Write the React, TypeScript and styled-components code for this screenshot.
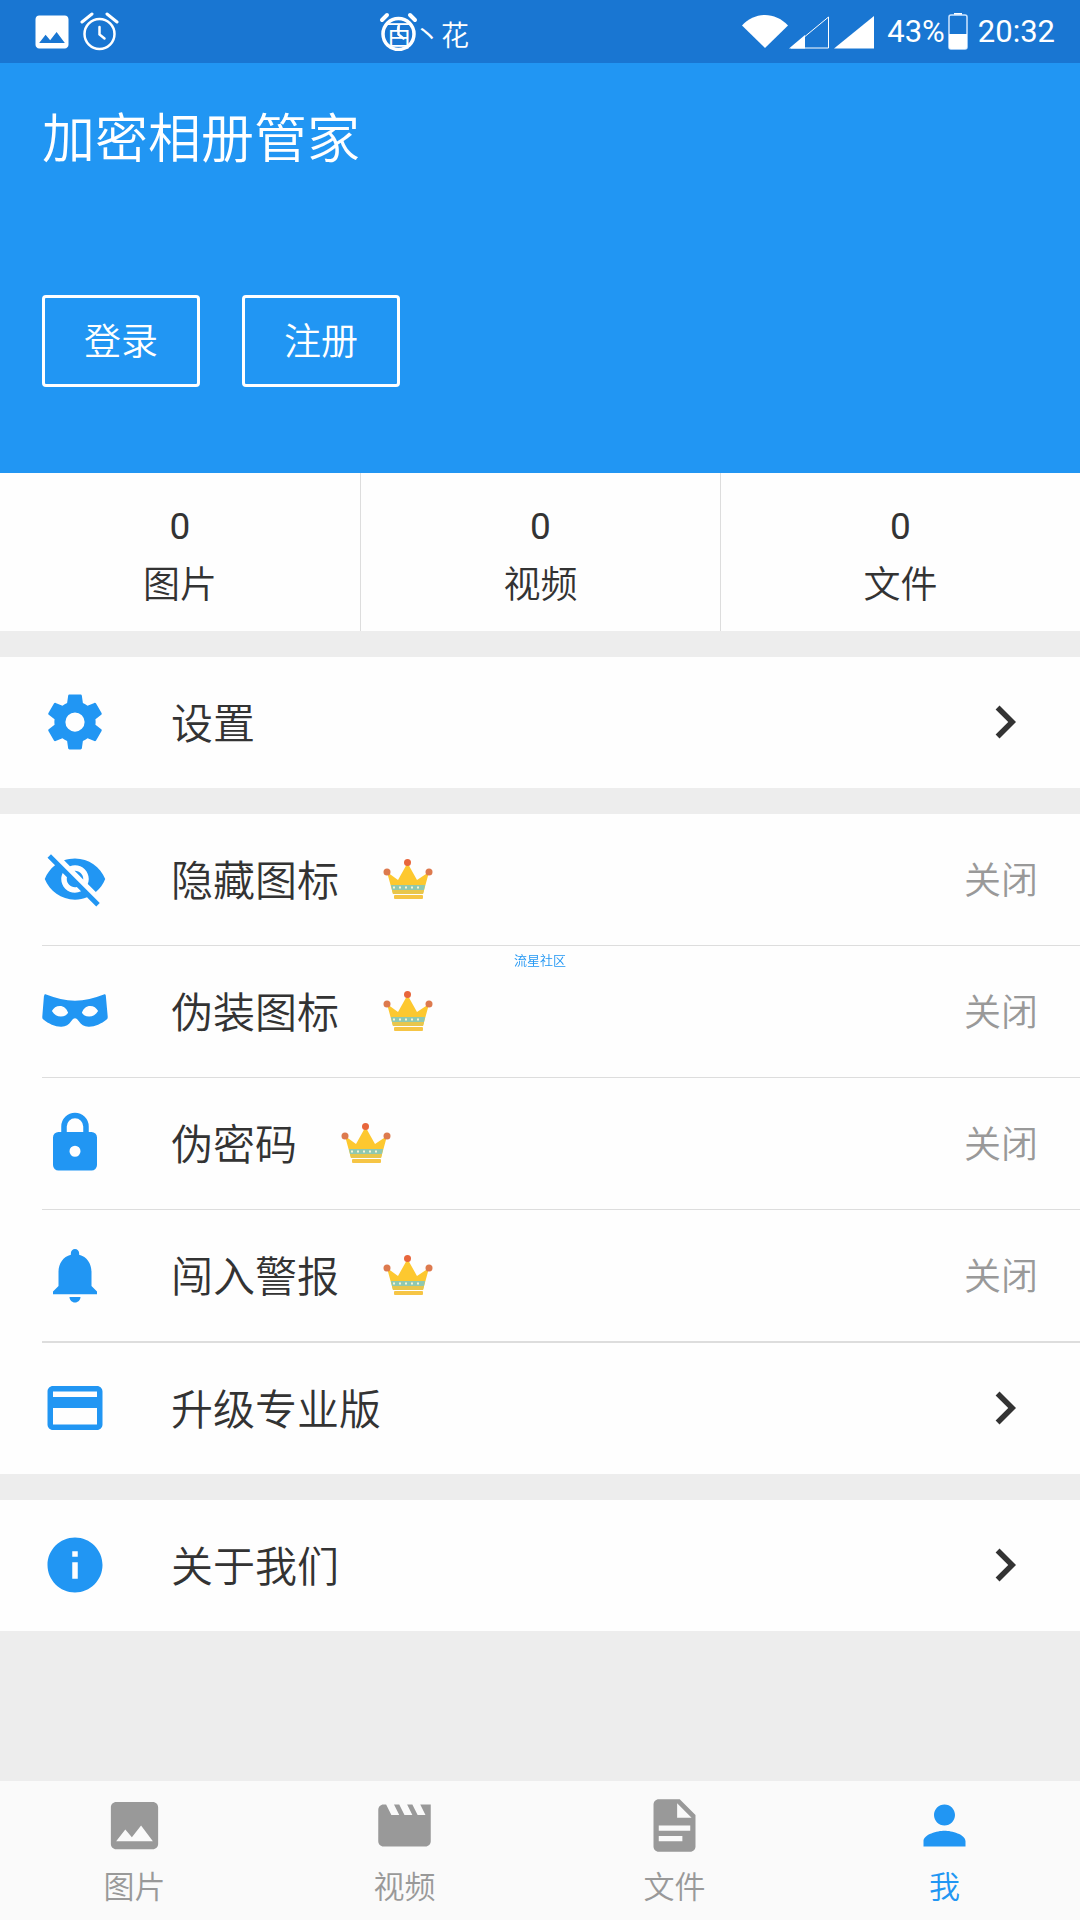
import React from "react";
import styled, { createGlobalStyle } from "styled-components";

const color = {
  primary: "#2196f3",
  primaryDark: "#1976d2",
  page: "#ededed",
  surface: "#fefefe",
  nav: "#fafafa",
  text: "#333333",
  muted: "#999999",
  line: "#dddddd",
};

const GlobalStyle = createGlobalStyle`
  * { box-sizing: border-box; }
  body {
    margin: 0;
    background: ${color.page};
    color: ${color.text};
    font-family: Roboto, "Noto Sans CJK SC", sans-serif;
    font-weight: 350;
  }
  button { font: inherit; color: inherit; background: none; border: 0; padding: 0; cursor: pointer; }
  a { color: inherit; text-decoration: none; }
  svg { display: block; flex: none; }
`;

const Page = styled.div`
  min-height: 100vh;
  display: flex;
  flex-direction: column;
`;

const StatusBar = styled.div`
  position: relative;
  display: flex;
  align-items: center;
  justify-content: space-between;
  height: 63px;
  padding: 0 25px 0 30px;
  background: ${color.primaryDark};
  color: #fff;
  font-size: 31px;
  font-weight: 400;
`;

const StatusGroup = styled.div<{ $gap: number }>`
  display: flex;
  align-items: center;
  gap: ${(p) => p.$gap}px;
`;

const Ticker = styled.div`
  position: absolute;
  left: 379px;
  top: 12px;
  display: grid;
  align-items: start;
  font-size: 28px;
  font-weight: 350;
  line-height: 50px;

  & > * { grid-area: 1 / 1; }
  & > span { padding-left: 6px; }
`;

const Level = styled.span`
  padding-left: 10px;
`;

const Clock = styled.time`
  padding-left: 7px;
`;

const Header = styled.header`
  display: flex;
  flex-direction: column;
  gap: 115px;
  padding: 37px 42px 86px;
  background: ${color.primary};
  color: #fff;
`;

const Title = styled.h1`
  margin: 0;
  font-size: 53px;
  font-weight: inherit;
  line-height: 80px;
`;

const Actions = styled.div`
  display: flex;
  gap: 42px;
`;

const OutlineButton = styled.button`
  && {
    padding: 18px 39px 14px;
    border: 3px solid #fff;
    border-radius: 4px;
    font-size: 37px;
    line-height: 54px;
  }
`;

const Stats = styled.section`
  display: grid;
  grid-template-columns: repeat(3, 1fr);
  background: ${color.surface};
`;

const Stat = styled.div`
  display: flex;
  flex-direction: column;
  align-items: center;
  gap: 1px;
  padding: 25px 0 16px;
  font-size: 37px;
  line-height: 58px;

  & + & { border-left: 1px solid ${color.line}; }
`;

const StatCount = styled.span`
  font-weight: 400;
`;

const Groups = styled.main`
  flex: 1;
  display: flex;
  flex-direction: column;
  gap: 26px;
  padding: 26px 0;
`;

const Group = styled.section`
  background: ${color.surface};
`;

const Divider = styled.hr<{ $thick?: boolean }>`
  height: ${(p) => (p.$thick ? 2 : 1)}px;
  margin: 0 0 0 42px;
  border: 0;
  background: ${color.line};
`;

const Row = styled.button`
  && {
    display: flex;
    align-items: center;
    width: 100%;
    height: 131px;
    padding: 0 42px 2px;
    color: ${color.text};
    text-align: left;
  }
`;

const RowIcon = styled.span`
  margin-right: 63px;
  color: ${color.primary};
`;

const RowLabel = styled.span`
  margin-right: 44px;
  padding-top: 7px;
  font-size: 42px;
  line-height: 62px;
`;

const RowEnd = styled.span`
  margin-left: auto;
`;

const RowState = styled(RowEnd)`
  padding-top: 7px;
  color: ${color.muted};
  font-size: 37px;
  line-height: 54px;
`;

const NavBar = styled.nav`
  display: grid;
  grid-template-columns: repeat(4, 1fr);
  background: ${color.nav};
`;

const NavItem = styled.a<{ $active?: boolean }>`
  display: flex;
  flex-direction: column;
  align-items: center;
  gap: 8px;
  padding: 13px 1px 9px 0;
  color: ${(p) => (p.$active ? color.primary : color.muted)};
  font-size: 31px;
  line-height: 46px;
`;

const Watermark = styled.div`
  position: fixed;
  inset: 0;
  display: grid;
  place-items: center;
  padding-bottom: 2px;
  color: ${color.primary};
  font-size: 13px;
  pointer-events: none;
`;

const paths = {
  settings:
    "M19.43 12.98c.04-.32.07-.64.07-.98s-.03-.66-.07-.98l2.11-1.65c.19-.15.24-.42.12-.64l-2-3.46c-.12-.22-.39-.3-.61-.22l-2.49 1c-.52-.4-1.08-.73-1.69-.98l-.38-2.65C14.46 2.18 14.25 2 14 2h-4c-.25 0-.46.18-.49.42l-.38 2.65c-.61.25-1.17.59-1.69.98l-2.49-1c-.23-.09-.49 0-.61.22l-2 3.46c-.13.22-.07.49.12.64l2.11 1.65c-.04.32-.07.65-.07.98s.03.66.07.98l-2.11 1.65c-.19.15-.24.42-.12.64l2 3.46c.12.22.39.3.61.22l2.49-1c.52.4 1.08.73 1.69.98l.38 2.65c.03.24.24.42.49.42h4c.25 0 .46-.18.49-.42l.38-2.65c.61-.25 1.17-.59 1.69-.98l2.49 1c.23.09.49 0 .61-.22l2-3.46c.12-.22.07-.49-.12-.64l-2.11-1.65zM12 15.5a3.5 3.5 0 1 1 0-7 3.5 3.5 0 0 1 0 7z",
  hidden:
    "M12 7c2.76 0 5 2.24 5 5 0 .65-.13 1.26-.36 1.83l2.92 2.92c1.51-1.26 2.7-2.89 3.43-4.75-1.73-4.39-6-7.5-11-7.5-1.4 0-2.74.25-3.98.7l2.16 2.16C10.74 7.13 11.35 7 12 7zM2 4.27l2.28 2.28.46.46C3.08 8.3 1.78 10.02 1 12c1.73 4.39 6 7.5 11 7.5 1.55 0 3.03-.3 4.38-.84l.42.42L19.73 22 21 20.73 3.27 3 2 4.27zM7.53 9.8l1.55 1.55c-.05.21-.08.43-.08.65 0 1.66 1.34 3 3 3 .22 0 .44-.03.65-.08l1.55 1.55c-.67.33-1.41.53-2.2.53-2.76 0-5-2.24-5-5 0-.79.2-1.53.53-2.2zm4.31-.78l3.15 3.15.02-.16c0-1.66-1.34-3-3-3l-.17.01z",
  mask:
    "M.9 6.1C1 5.9 1.2 5.9 1.5 6C5 7.2 8.500 8.300 12 8.300S19 7.200 22.500 6C22.800 5.900 23.100 5.900 23.200 6.400L23.900 14.100C23.900 14.600 23.800 14.900 23.500 15.100C21.600 16.700 19 17.800 16.900 17.700C15.300 17.600 14.200 16.900 13.400 15.700C12.900 15 12.500 14.600 12 14.600S11.100 15 10.600 15.700C9.800 16.900 8.700 17.600 7.100 17.700C5 17.800 2.400 16.700.5 15.100C.200 14.900.100 14.600.100 14.100L.700 6.600ZM3.600 12C4.500 13.400 5.500 14 6.900 14C8.200 14 9 13.300 9.500 12.600C8.900 11.100 7.900 10.200 6.500 10.200C5.200 10.200 4.200 10.900 3.600 12ZM20.400 12C19.800 10.900 18.800 10.200 17.500 10.200C16.100 10.200 15.100 11.100 14.500 12.600C15 13.300 15.800 14 17.100 14C18.500 14 19.500 13.400 20.400 12Z",
  lock:
    "M18 8h-1V6A5 5 0 0 0 7 6v2H6a2 2 0 0 0-2 2v10a2 2 0 0 0 2 2h12a2 2 0 0 0 2-2V10a2 2 0 0 0-2-2zm-6 9a2 2 0 1 1 0-4 2 2 0 0 1 0 4zM15 8H9V6a3 3 0 0 1 6 0v2z",
  bell:
    "M12 22c1.100 0 2-.9 2-2h-4c0 1.100.9 2 2 2zm6-6v-5c0-3.070-1.640-5.640-4.500-6.320V4c0-.83-.67-1.500-1.500-1.500s-1.500.67-1.500 1.500v.68C7.630 5.360 6 7.920 6 11v5l-2 2v1h16v-1l-2-2z",
  card:
    "M20 4H4c-1.110 0-1.990.89-1.990 2L2 18c0 1.110.89 2 2 2h16c1.110 0 2-.89 2-2V6c0-1.110-.89-2-2-2zm0 14H4v-6h16v6zm0-10H4V6h16v2z",
  info:
    "M12 2C6.480 2 2 6.480 2 12s4.480 10 10 10 10-4.480 10-10S17.520 2 12 2zm1 15h-2v-6h2v6zm0-8h-2V7h2v2z",
  chevron: "M10 6 8.590 7.410 13.170 12l-4.580 4.590L10 18l6-6z",
  image:
    "M21 19V5c0-1.100-.9-2-2-2H5c-1.100 0-2 .9-2 2v14c0 1.100.9 2 2 2h14c1.100 0 2-.9 2-2zM8.500 13.500l2.500 3.010L14.500 12l4.500 6H5l3.500-4.500z",
  movie:
    "M18 4l2 4h-3l-2-4h-2l2 4h-3l-2-4H8l2 4H7L5 4H4c-1.100 0-1.990.9-1.990 2L2 18c0 1.100.9 2 2 2h16c1.100 0 2-.9 2-2V4h-4z",
  file:
    "M14 2H6c-1.100 0-1.990.9-1.990 2L4 20c0 1.100.89 2 1.990 2H18c1.100 0 2-.9 2-2V8l-6-6zm1 16H6v-2h9v2zm3-4H6v-2h12v2zm-5-5V3.500L18.500 9H13z",
  person:
    "M12 12c2.210 0 4-1.790 4-4s-1.790-4-4-4-4 1.790-4 4 1.790 4 4 4zm0 2c-2.670 0-8 1.340-8 4v2h16v-2c0-2.660-5.330-4-8-4z",
};

type IconName = keyof typeof paths;

function Icon({ name, size }: { name: IconName; size: number }) {
  return (
    <svg width={size} height={size} viewBox="0 0 24 24" fill="currentColor" fillRule="evenodd" aria-hidden="true">
      <path d={paths[name]} />
    </svg>
  );
}

function Crown() {
  return (
    <svg width="50" height="42" viewBox="0 0 50 42" aria-hidden="true">
      <path d="M4 14 15 22 24.500 5 34 22 46 14 40 36H10z" fill="#fdc82f" />
      <path d="M8 27h34l-1 5H9z" fill="#8fc8b0" />
      <path d="M9 32h32l-1 4H10z" fill="#e8c64c" />
      <path d="M10 29.500h30" stroke="#f4f4d8" strokeWidth="2" strokeDasharray="2 4" />
      <rect x="11" y="37" width="29" height="4" rx="1" fill="#f6c545" />
      <circle cx="24.500" cy="4.500" r="3.500" fill="#e8663c" />
      <circle cx="4" cy="14" r="3.500" fill="#dd7a4e" />
      <circle cx="46" cy="14" r="3.500" fill="#dd7a4e" />
    </svg>
  );
}

function Alarm({ bold }: { bold?: boolean }) {
  return (
    <svg width="39" height="39" viewBox="0 0 39 39" fill="none" stroke="#fff" strokeLinecap="round" aria-hidden="true">
      <circle cx="19.500" cy="22" r={bold ? 15.5 : 15} strokeWidth={bold ? 3.5 : 2.5} />
      <path d={bold ? "M3 8l5-5M36 8l-5-5" : "M2 10 12 2M37 10 27 2"} strokeWidth={bold ? 4 : 3} />
      <path d="M19.500 15v7.500l5 4" strokeWidth="2.500" />
    </svg>
  );
}

function SystemSignals() {
  return (
    <svg width="132" height="34" viewBox="0 0 132 34" fill="#fff" aria-hidden="true">
      <path d="M0 10.500C13-3.500 33-3.500 46 10.500L23 33z" />
      <path d="M86.500 2v31H49z" fill="none" stroke="#fff" />
      <path d="M47 33.500 63 20v13.500z" />
      <path d="M92 33.500 132 1v32.500z" />
    </svg>
  );
}

function Battery() {
  return (
    <svg width="20" height="37" viewBox="0 0 20 37" aria-hidden="true">
      <rect x="6" y="0" width="8" height="2" fill="#fff" />
      <rect x="1" y="2" width="18" height="34" rx="2" fill="none" stroke="#cfe6ff" strokeWidth="1.500" />
      <path d="M1 21h18v13a2 2 0 0 1-2 2H3a2 2 0 0 1-2-2z" fill="#fff" />
    </svg>
  );
}

type RowData = { icon: IconName; label: string; pro?: boolean; state?: string };

const groups: RowData[][] = [
  [{ icon: "settings", label: "设置" }],
  [
    { icon: "hidden", label: "隐藏图标", pro: true, state: "关闭" },
    { icon: "mask", label: "伪装图标", pro: true, state: "关闭" },
    { icon: "lock", label: "伪密码", pro: true, state: "关闭" },
    { icon: "bell", label: "闯入警报", pro: true, state: "关闭" },
    { icon: "card", label: "升级专业版" },
  ],
  [{ icon: "info", label: "关于我们" }],
];

const stats = [
  { label: "图片", count: 0 },
  { label: "视频", count: 0 },
  { label: "文件", count: 0 },
];

const tabs: { icon: IconName; label: string }[] = [
  { icon: "image", label: "图片" },
  { icon: "movie", label: "视频" },
  { icon: "file", label: "文件" },
  { icon: "person", label: "我" },
];

export default function App() {
  const activeTab = "我";
  return (
    <Page lang="zh-CN">
      <GlobalStyle />
      <StatusBar>
        <StatusGroup $gap={6}>
          <Icon name="image" size={44} />
          <Alarm />
        </StatusGroup>
        <Ticker>
          <Alarm bold />
          <span>百丶花</span>
        </Ticker>
        <StatusGroup $gap={3}>
          <SystemSignals />
          <Level>43%</Level>
          <Battery />
          <Clock>20:32</Clock>
        </StatusGroup>
      </StatusBar>

      <Header>
        <Title>加密相册管家</Title>
        <Actions>
          <OutlineButton type="button">登录</OutlineButton>
          <OutlineButton type="button">注册</OutlineButton>
        </Actions>
      </Header>

      <Stats>
        {stats.map((s) => (
          <Stat key={s.label}>
            <StatCount>{s.count}</StatCount>
            <span>{s.label}</span>
          </Stat>
        ))}
      </Stats>

      <Groups>
        {groups.map((rows) => (
          <Group key={rows[0].label}>
            {rows.map((row, i) => (
              <React.Fragment key={row.label}>
                {i > 0 && <Divider $thick={i === rows.length - 1} />}
                <Row type="button">
                  <RowIcon>
                    <Icon name={row.icon} size={66} />
                  </RowIcon>
                  <RowLabel>{row.label}</RowLabel>
                  {row.pro && <Crown />}
                  {row.state ? (
                    <RowState>{row.state}</RowState>
                  ) : (
                    <RowEnd>
                      <Icon name="chevron" size={66} />
                    </RowEnd>
                  )}
                </Row>
              </React.Fragment>
            ))}
          </Group>
        ))}
      </Groups>

      <NavBar>
        {tabs.map((t) => (
          <NavItem key={t.label} href={`#${t.icon}`} $active={t.label === activeTab}>
            <Icon name={t.icon} size={63} />
            <span>{t.label}</span>
          </NavItem>
        ))}
      </NavBar>
      <Watermark>流星社区</Watermark>
    </Page>
  );
}
